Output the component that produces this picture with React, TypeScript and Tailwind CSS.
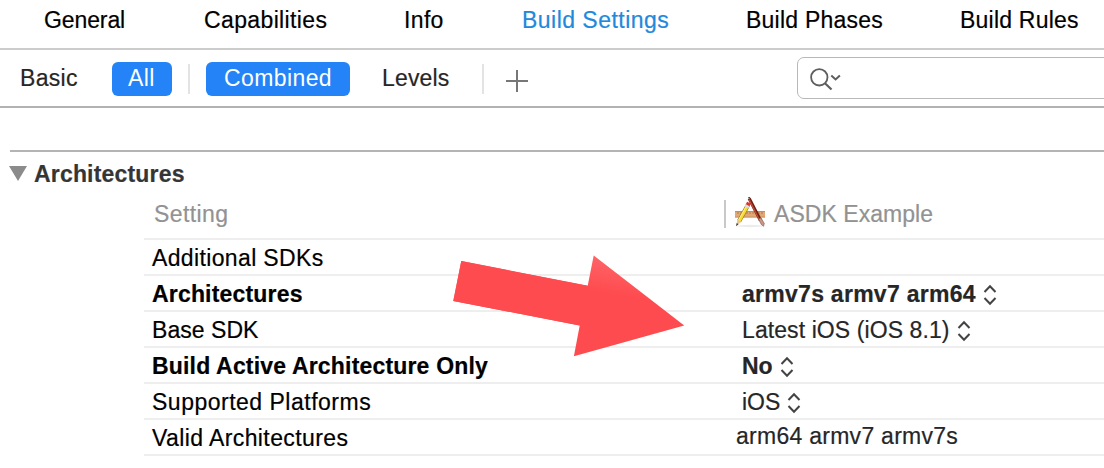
import React from 'react';

const tabs = [
  { label: 'General', cls: 'w-[160px] tracking-[-0.1px]' },
  { label: 'Capabilities', cls: 'w-[200px] tracking-[0.37px]' },
  { label: 'Info', cls: 'w-[118px] tracking-[0.35px]' },
  { label: 'Build Settings', cls: 'w-[224px] tracking-[0.47px] text-[#2189dc]' },
  { label: 'Build Phases', cls: 'w-[214px] tracking-[0.23px]' },
  { label: 'Build Rules', cls: 'w-[144px] tracking-[0.22px]' },
];

const rows = [
  { name: 'Additional SDKs', nameCls: 'tracking-[0.36px]', value: '', valueCls: '', bold: false, menu: false },
  { name: 'Architectures', nameCls: 'tracking-[0.18px]', value: 'armv7s armv7 arm64', valueCls: 'tracking-[0.27px]', bold: true, menu: true },
  { name: 'Base SDK', nameCls: 'tracking-[0.05px]', value: 'Latest iOS (iOS 8.1)', valueCls: 'tracking-[0.09px]', bold: false, menu: true },
  { name: 'Build Active Architecture Only', nameCls: 'tracking-[0.18px]', value: 'No', valueCls: 'tracking-[0px]', bold: true, menu: true },
  { name: 'Supported Platforms', nameCls: 'tracking-[0.5px]', value: 'iOS', valueCls: 'tracking-[0px]', bold: false, menu: true },
  { name: 'Valid Architectures', nameCls: 'tracking-[0.4px]', value: 'arm64 armv7 armv7s', valueCls: 'tracking-[0.27px]', bold: false, menu: false },
];

function Stepper() {
  return (
    <svg className="ml-[7px] mt-[3px] h-[22px] w-[14px] shrink-0" viewBox="0 0 14 22" fill="none" stroke="#444" strokeWidth="2">
      <path d="M1.5 8 7 2.2 12.500 8M1.500 14 7 19.800 12.500 14" />
    </svg>
  );
}

function AppIcon() {
  return (
    <svg className="ml-[9px] h-[32px] w-[30px] shrink-0" viewBox="0 0 30 32">
      <ellipse cx="15" cy="29" rx="13" ry="1.200" fill="#ececec" />
      <rect x="0" y="14" width="30" height="6.500" fill="#e0a874" />
      <path d="M0 14.500h30" stroke="#c48c60" />
      <path d="M0 20h30" stroke="#cf9464" />
      <path d="M3 15v2M6 15v2M12 15v2M15 15v2M18 15v2M24 15v2M27 15v2" stroke="#a36b41" strokeWidth="0.700" />
      <path d="M14.200 1.500 25.500 23.500" stroke="#6d2015" strokeWidth="3.200" />
      <path d="M14 2.500 24.300 22.500" stroke="#c44d36" strokeWidth="1.300" />
      <path d="M13.200 1 15 0.300" stroke="#4c3630" strokeWidth="1.200" />
      <path d="M23.500 22 26 20.800 29.300 26.500 28.500 29.300 26.300 27.500Z" fill="#cb9785" stroke="#805548" strokeWidth="0.600" />
      <path d="M13 8 4.200 24" stroke="#907425" strokeWidth="4.400" />
      <path d="M13 8 4.200 24" stroke="#f8db35" strokeWidth="3.200" />
      <path d="M12 8 3.400 23.300" stroke="#fff27a" strokeWidth="1" />
      <path d="M12.600 8.300 14 5.700" stroke="#e62f35" strokeWidth="4.200" />
      <path d="M11.700 10 12.600 8.400" stroke="#dcdcea" strokeWidth="4.200" />
      <path d="M2.200 22.800 6.200 25 1.500 28.700Z" fill="#e4c697" />
      <path d="M1.700 26 3.500 27.200 1 29.200Z" fill="#3c3428" />
    </svg>
  );
}

export default function App() {
  return (
    <div className="relative h-[468px] w-[1104px] overflow-hidden bg-white font-['Liberation_Sans',Arial,sans-serif] text-[23px] leading-[26px] whitespace-nowrap text-black [-webkit-text-stroke:0.2px_currentColor]">
      <nav className="flex h-[50px] border-b-2 border-[#ccc] pt-[7px] pl-[44px]">
        {tabs.map((t) => (
          <div key={t.label} className={`shrink-0 ${t.cls}`}>{t.label}</div>
        ))}
      </nav>

      <div className="flex h-[58px] border-b-2 border-[#b2b2b2] text-[#262626]">
        <div className="mt-[15px] ml-[20px] w-[92px] shrink-0 tracking-[0.3px]">Basic</div>
        <div className="mt-[12px] h-[34px] w-[60px] shrink-0 rounded-[6px] bg-[#2383f7] pt-[3px] pl-[16px] tracking-[0.35px] text-white [-webkit-text-stroke:0px]">All</div>
        <div className="mt-[14px] ml-[16px] h-[30px] w-[2px] shrink-0 bg-[#e3e3e3]" />
        <div className="mt-[12px] ml-[16px] h-[34px] w-[144px] shrink-0 rounded-[6px] bg-[#2383f7] pt-[3px] pl-[18px] tracking-[0.4px] text-white [-webkit-text-stroke:0px]">Combined</div>
        <div className="mt-[15px] ml-[32px] w-[100px] shrink-0 tracking-[0.15px]">Levels</div>
        <div className="mt-[14px] h-[30px] w-[2px] shrink-0 bg-[#e3e3e3]" />
        <svg className="mt-[20px] ml-[22px] h-[22px] w-[22px] shrink-0" viewBox="0 0 22 22" stroke="#777" strokeWidth="2">
          <path d="M0 11H22M11 0V22" />
        </svg>
        <div className="mt-[7px] ml-[269px] h-[42px] w-[320px] shrink-0 rounded-[7px] border border-[#b8b8b8]">
          <svg className="mt-[9px] ml-[12px] h-[26px] w-[32px]" viewBox="0 0 32 26" fill="none" stroke="#5e5e5e" strokeWidth="1.800">
            <circle cx="9.300" cy="10.300" r="8.200" />
            <path d="M15 16.300 21.500 22.500" strokeWidth="2.200" />
            <path d="M21.300 8.600 25.600 12.500 29.900 8.600" strokeWidth="2" />
          </svg>
        </div>
      </div>

      <section className="mt-[42px] ml-[10px] h-[88px] border-t-2 border-[#b4b4b4]">
        <div className="flex h-[36px] pt-[9px]">
          <svg className="-ml-px mt-[5px] h-[15px] w-[18px]" viewBox="0 0 18 15" fill="#8b8b8b">
            <path d="M0 0H18L9 15Z" />
          </svg>
          <h2 className="ml-[7px] font-bold tracking-[0.18px] text-[#353535]">Architectures</h2>
        </div>
        <div className="flex pl-[144px] text-[#929292]">
          <div className="mt-[13px] w-[570px] shrink-0 tracking-[0.4px]">Setting</div>
          <div className="mt-[12px] h-[28px] w-[2px] shrink-0 bg-[#c9c9c9]" />
          <div className="mt-[9px] flex">
            <AppIcon />
            <div className="mt-[4px] ml-[9px] tracking-[0.05px]">ASDK Example</div>
          </div>
        </div>
      </section>

      <div className="ml-[144px] border-t-2 border-[#eee]">
        {rows.map((r) => (
          <div key={r.name} className={`flex h-[36px] border-b-2 border-[#eee] ${r.bold ? 'font-bold' : ''}`}>
            <div className={`w-[590px] shrink-0 pt-[5px] pl-[8px] ${r.nameCls}`}>{r.name}</div>
            <div className={`flex text-[#262626] ${r.name === 'Valid Architectures' ? 'pt-[3px] pl-[2px]' : 'pt-[5px] pl-[8px]'}`}>
              <span className={r.valueCls}>{r.value}</span>
              {r.menu && <Stepper />}
            </div>
          </div>
        ))}
      </div>

      <svg className="absolute top-[250px] left-[450px] h-[112px] w-[240px]" viewBox="450 250 240 112">
        <defs>
          <linearGradient id="head" gradientUnits="userSpaceOnUse" x1="604" y1="255" x2="598" y2="292">
            <stop offset="0" stopColor="#ff6568" />
            <stop offset="1" stopColor="#fe4b4f" />
          </linearGradient>
        </defs>
        <path d="M461.300 261 587.700 285.700 593.700 255.500 684.200 325.500 573.900 356.200 579.700 325.600 453.300 300.900Z" fill="url(#head)" />
        <path d="M461.300 261 587.700 285.700 579.700 325.600 453.300 300.900Z" fill="#fe4b4f" />
      </svg>
    </div>
  );
}
